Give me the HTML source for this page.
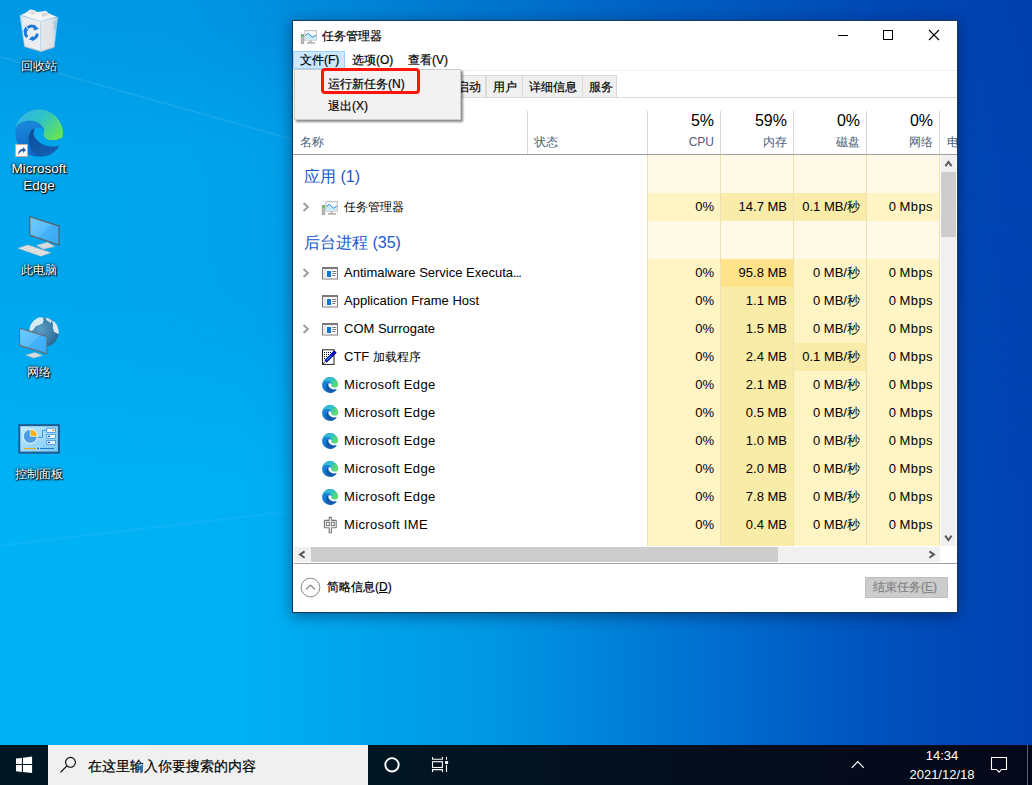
<!DOCTYPE html><html><head><meta charset="utf-8"><style>
*{box-sizing:border-box}
html,body{margin:0;padding:0}
body{width:1032px;height:785px;overflow:hidden;position:relative;font-family:"Liberation Sans",sans-serif;
background:linear-gradient(90deg,#00b2f5 0%,#00b0f4 24%,#0096e4 48%,#0068cc 72.7%,#0052be 85%,#0044b4 97%,#0042b2 100%);}
.a{position:absolute;white-space:nowrap}
.lbl{position:absolute;color:#fff;font-size:12px;line-height:17px;text-align:center;width:80px;left:-1px;
text-shadow:0 0 2px #000,0 0 3px rgba(0,0,0,.7),1px 1px 1px #000}
.t{position:absolute;white-space:nowrap;font-size:12px;line-height:14px;color:#000;-webkit-text-stroke:0.2px currentColor}
.r{position:absolute;white-space:nowrap;font-size:13px;line-height:16px;color:#000}
.rv{position:absolute;white-space:nowrap;font-size:13px;line-height:16px;color:#000;text-align:right}
.hd{position:absolute;white-space:nowrap;color:#4c607a;font-size:12px;line-height:14px}
.b{position:absolute}
</style></head><body>
<div class="b" style="left:0;top:0;width:1032px;height:745px;background:linear-gradient(90deg,rgba(0,60,170,.22) 0%,rgba(0,60,170,.22) 17%,rgba(0,60,170,.36) 44%,rgba(0,60,170,.42) 68%,rgba(0,60,170,.42) 100%);-webkit-mask-image:linear-gradient(180deg,#000 0%,rgba(0,0,0,.9) 6%,rgba(0,0,0,.45) 20%,rgba(0,0,0,.4) 40%,rgba(0,0,0,0) 64%);mask-image:linear-gradient(180deg,#000 0%,rgba(0,0,0,.9) 6%,rgba(0,0,0,.45) 20%,rgba(0,0,0,.4) 40%,rgba(0,0,0,0) 64%)"></div>
<div class="b" style="left:0px;top:56px;width:320px;height:2px;background:rgba(255,255,255,.08);transform:rotate(15.7deg);transform-origin:0 0"></div>
<div class="b" style="left:0px;top:544px;width:320px;height:3px;background:rgba(255,255,255,.035);transform:rotate(-6.7deg);transform-origin:0 0"></div>
<svg class="b" style="left:16px;top:6px" width="46" height="48" viewBox="16 6 46 48">
<defs><linearGradient id="rbl" x1="0" y1="0" x2="1" y2="0"><stop offset="0" stop-color="#bcdaf0"/><stop offset="0.18" stop-color="#e8ecef"/><stop offset="1" stop-color="#eef0f2"/></linearGradient>
<linearGradient id="rbr" x1="0" y1="0" x2="1" y2="0"><stop offset="0" stop-color="#e6e8ea"/><stop offset="0.7" stop-color="#dde2e6"/><stop offset="1" stop-color="#a9cbe6"/></linearGradient></defs>
<polygon points="20,15.2 40.5,21.3 41,51.3 24.6,46.4" fill="url(#rbl)" stroke="#b4d2ea" stroke-width="0.6"/>
<polygon points="40.5,21.3 57.6,17 54.2,47 41,51.3" fill="url(#rbr)" stroke="#b4d2ea" stroke-width="0.6"/>
<polygon points="52.5,22 56.8,20 55.5,31 53,28 54.5,25" fill="#a6c8e4"/>
<polygon points="21,15 27,12 30,9.5 34,10 37,12 42,11.5 46,10.8 48,13 56.5,16.8 40.5,21.3" fill="#f4f4f4"/>
<polygon points="28,13 33,10.5 36,13 33,15" fill="#dcdcdc"/>
<polygon points="41,14 46,12 48,15 43,17" fill="#d4d4d4"/>
<g fill="none" stroke="#1e78d8" stroke-width="3">
<path d="M27.6 27.8A6 6 0 0 1 35.2 27.4"/>
<path d="M37.3 33.6A6 6 0 0 1 32.2 39"/>
<path d="M27.3 37A6 6 0 0 1 25.6 30.6"/>
</g>
<g fill="#1e78d8"><polygon points="34.2,24.6 38.8,29 33.6,30.4"/><polygon points="34,41 28.8,39.6 32.6,35.8"/><polygon points="23.2,31.6 25.4,26.4 28.6,30.6"/></g>
<path d="M24.6 46.4L41 51.3L54.2 47" fill="none" stroke="#d8c8c0" stroke-width="0.8"/>
</svg>
<svg class="b" style="left:15px;top:109px" width="48" height="48" viewBox="0 0 48 48"><defs><linearGradient id="ecbig" x1="0" y1="0.1" x2="1" y2="0.7"><stop offset="0" stop-color="#36b4ee"/><stop offset="0.5" stop-color="#2ec4c4"/><stop offset="1" stop-color="#64e25c"/></linearGradient><linearGradient id="embig" x1="0" y1="0" x2="0.3" y2="1"><stop offset="0" stop-color="#2096e6"/><stop offset="1" stop-color="#0c66c4"/></linearGradient><linearGradient id="edbig" x1="0" y1="0" x2="0.8" y2="1"><stop offset="0" stop-color="#0c4c98"/><stop offset="1" stop-color="#1462b6"/></linearGradient></defs><mask id="hmbig"><rect width="48" height="48" fill="#fff"/><path d="M20 19C22.5 17.8 27 18.5 28.8 21.5C28.5 22.8 28.2 24 28.2 25.5C28.2 29 32 31.5 37.5 31.5C41 31.5 44.5 30.3 47.6 28.5L49 28V39L44.5 38.5L30 39L18 32Z" fill="#000"/></mask><g mask="url(#hmbig)"><circle cx="24" cy="24" r="23.8" fill="url(#embig)"/><path d="M0.1 20.5C1.5 15 7.5 11.4 14.2 11.4C21 11.4 26.8 14.5 28.8 20C29.1 21.5 28.2 23.5 28.2 25.5C28.2 29 32 31.5 37.5 31.5C41 31.5 44.5 30.3 47.6 28.5A23.9 23.9 0 0 0 0.1 20.5Z" fill="url(#ecbig)"/></g><path d="M20 19C15.5 20.5 13.2 26 13.5 31.4C14 39.5 19.5 46.5 26.5 47.2C34.5 47.8 41.5 42.5 44.5 36.2C42 37.3 40 37.6 37.5 37.6C30 37.6 22 33.5 18.8 26.5C18 24.5 18.5 21 20 19Z" fill="url(#edbig)"/></svg>
<svg class="b" style="left:15px;top:144px" width="13" height="13" viewBox="0 0 13 13"><rect x="0.5" y="0.5" width="12" height="12" fill="#fff" stroke="#c9ab95" stroke-width="1"/>
<path d="M3.5 11C3 7.5 4.5 5.2 8 4.8V3L11 6L8 9V7C6 7 4.5 8.2 3.5 11Z" fill="#2a5cae"/></svg>
<svg class="b" style="left:14px;top:210px" width="50" height="50" viewBox="14 210 50 50">
<defs><linearGradient id="pcs" x1="0" y1="0" x2="1" y2="1"><stop offset="0" stop-color="#72caff"/><stop offset="0.5" stop-color="#58bcfb"/><stop offset="0.52" stop-color="#44b2f8"/><stop offset="1" stop-color="#38aaf4"/></linearGradient></defs>
<polygon points="29.3,216 59.5,225.6 59.5,245.7 29.3,235.8" fill="#5e5e5e"/>
<polygon points="30.4,217.6 58.4,226.4 58.4,244.2 30.4,234.8" fill="url(#pcs)"/>
<polygon points="36.3,245.3 47.5,242.2 54.8,246.6 43.5,249.2" fill="#d6dadd" stroke="#b0b4b8" stroke-width="0.4"/>
<polygon points="17.8,248.2 28,244.9 50.9,252.7 40.8,256.2" fill="#e8e8e8" stroke="#aeb2b6" stroke-width="0.5"/>
<g stroke="#c4c4c4" stroke-width="0.4"><path d="M21 247.2L44 254.9M24.5 246L47.5 253.6M23 249.5L33 246.2M28 251.2L38 247.9M33 252.9L43 249.6M38 254.6L48 251.3"/></g>
</svg>
<svg class="b" style="left:14px;top:312px" width="50" height="50" viewBox="14 312 50 50">
<defs><radialGradient id="glb" cx="0.4" cy="0.4" r="0.75"><stop offset="0" stop-color="#5a9ec6"/><stop offset="1" stop-color="#25628c"/></radialGradient>
<linearGradient id="nws" x1="0" y1="0" x2="1" y2="1"><stop offset="0" stop-color="#72caff"/><stop offset="0.5" stop-color="#58bcfb"/><stop offset="0.52" stop-color="#44b2f8"/><stop offset="1" stop-color="#38aaf4"/></linearGradient></defs>
<circle cx="43.6" cy="332.2" r="15" fill="url(#glb)"/>
<polygon points="29.2,330 30.5,325 34,320.2 38.5,317.6 43,317.2 43.6,320.5 42.5,323.5 39,325 35.5,326.5 34,329 31.5,331.5" fill="#d6ecf5"/>
<polygon points="45.5,317.6 49,318.5 52,320.5 50.5,323 48.5,321.5 46.5,320" fill="#cfe6f2"/>
<polygon points="51.5,321.2 54.2,321.5 57,325 58.6,330 58.8,333.5 57,333.5 53.8,331.5 52.8,327 53.2,324" fill="#d6ecf5"/>
<polygon points="19.1,327.6 47.4,336.2 47.4,354.4 19.1,346" fill="#6a6a6a"/>
<polygon points="20.1,329 46.4,337 46.4,353 20.1,345" fill="url(#nws)"/>
<polygon points="25.5,355 35,352.5 42.7,355.6 33.5,358" fill="#d6dadd" stroke="#b0b4b8" stroke-width="0.4"/>
</svg>
<svg class="b" style="left:14px;top:418px" width="50" height="40" viewBox="14 418 50 40">
<defs><linearGradient id="cpg" x1="0" y1="0" x2="1" y2="1"><stop offset="0" stop-color="#c4ecfe"/><stop offset="1" stop-color="#78c8f4"/></linearGradient></defs>
<rect x="18.3" y="424.1" width="41.6" height="29.6" fill="#1d5e96"/>
<rect x="20.3" y="426.2" width="37.6" height="25.4" fill="url(#cpg)"/>
<circle cx="30.3" cy="436.3" r="7" fill="#4a9ee0" stroke="#f4faff" stroke-width="0.9"/>
<path d="M30.3 436.3V429.3A7 7 0 0 1 37.3 436.3Z" fill="#f8b010" stroke="#f4faff" stroke-width="0.7"/>
<polyline points="37.5,437.4 42.5,437.4 42.5,430.4 46.6,430.4" fill="none" stroke="#2a86d8" stroke-width="0.8"/>
<g fill="#eef8ff" stroke="#2a86d8" stroke-width="0.7"><rect x="46.8" y="428.2" width="8.6" height="4.2"/><rect x="46.8" y="434.4" width="8.6" height="4.2"/><rect x="46.8" y="440.4" width="8.6" height="4.2"/></g>
<rect x="52.3" y="429.7" width="2" height="1.2" fill="#f07010"/><rect x="48" y="435.8" width="2" height="1.2" fill="#0a4a8a"/><rect x="48" y="441.8" width="2" height="1.2" fill="#0a4a8a"/>
<path d="M24 448.5H36.5" stroke="#f5a000" stroke-width="0.9"/><path d="M39.5 448.5H54" stroke="#0a62c8" stroke-width="0.8"/>
<rect x="36.6" y="447.1" width="2.8" height="2.8" fill="#0a84f0" stroke="#f4faff" stroke-width="0.6"/>
</svg>
<div class="lbl" style="top:58px">回收站</div>
<div class="lbl" style="top:160px;font-size:13.5px;line-height:17.2px">Microsoft<br>Edge</div>
<div class="lbl" style="top:262px">此电脑</div>
<div class="lbl" style="top:364px">网络</div>
<div class="lbl" style="top:466px">控制面板</div>
<div class="b" style="left:292px;top:20px;width:666px;height:593px;background:#fff;border:1px solid #143a5c;box-shadow:0 3px 14px rgba(0,10,40,.45)"></div>
<svg class="b" style="left:300px;top:29px" width="18" height="16" viewBox="0 0 18 16">
<rect x="1.2" y="5.6" width="2.6" height="9" fill="#c4c4c4" stroke="#8c8c8c" stroke-width="0.7"/>
<rect x="1.5" y="6.1" width="2" height="1.6" fill="#30d030"/>
<rect x="4.3" y="1" width="12.7" height="10.7" fill="#c6c6c6"/>
<rect x="5.5" y="2.2" width="10.3" height="8.3" fill="#fafdff"/>
<polygon points="5.5,6.6 8.4,4.2 12.5,8.3 15.8,6.2 15.8,10.5 5.5,10.5" fill="#c6ebfb"/>
<polyline points="5.5,6.6 8.4,4.2 12.5,8.3 15.8,6.2" fill="none" stroke="#2080d0" stroke-width="1"/>
<rect x="9.3" y="11.7" width="2.6" height="1.5" fill="#b4b4b4"/>
<rect x="7" y="13.1" width="8" height="1.7" fill="#b4b4b4"/>
</svg>
<div class="t" style="left:322px;top:29px">任务管理器</div>
<div class="b" style="left:838px;top:35px;width:10px;height:1px;background:#000"></div>
<div class="b" style="left:883px;top:30px;width:10px;height:10px;border:1px solid #000"></div>
<svg class="b" style="left:928px;top:29px" width="12" height="12" viewBox="0 0 12 12"><path d="M1 1L11 11M11 1L1 11" stroke="#000" stroke-width="1.1"/></svg>
<div class="b" style="left:293px;top:51px;width:52px;height:18px;background:#cce8ff;border:1px solid #99d1ff"></div>
<div class="t" style="left:300px;top:53px">文件(F)</div>
<div class="t" style="left:352px;top:53px">选项(O)</div>
<div class="t" style="left:408px;top:53px">查看(V)</div>
<div class="b" style="left:293px;top:70px;width:664px;height:1px;background:#f0f0f0"></div>
<div class="b" style="left:296px;top:75px;width:190px;height:23px;background:#f0f0f0;border:1px solid #d9d9d9"></div>
<div class="t" style="left:457px;top:80px">启动</div>
<div class="b" style="left:486px;top:75px;width:37px;height:23px;background:#f0f0f0;border:1px solid #d9d9d9"></div>
<div class="t" style="left:493px;top:80px">用户</div>
<div class="b" style="left:522px;top:75px;width:61px;height:23px;background:#f0f0f0;border:1px solid #d9d9d9"></div>
<div class="t" style="left:529px;top:80px">详细信息</div>
<div class="b" style="left:582px;top:75px;width:35px;height:23px;background:#f0f0f0;border:1px solid #d9d9d9"></div>
<div class="t" style="left:589px;top:80px">服务</div>
<div class="b" style="left:293px;top:97px;width:664px;height:1px;background:#d9d9d9"></div>
<div class="b" style="left:527px;top:111px;width:1px;height:43px;background:#d8d8d8"></div>
<div class="b" style="left:647px;top:111px;width:1px;height:43px;background:#d8d8d8"></div>
<div class="b" style="left:720px;top:111px;width:1px;height:43px;background:#d8d8d8"></div>
<div class="b" style="left:793px;top:111px;width:1px;height:43px;background:#d8d8d8"></div>
<div class="b" style="left:866px;top:111px;width:1px;height:43px;background:#d8d8d8"></div>
<div class="b" style="left:939px;top:111px;width:1px;height:43px;background:#d8d8d8"></div>
<div class="hd" style="left:300px;top:135px">名称</div>
<div class="hd" style="left:534px;top:135px">状态</div>
<div class="a" style="right:318px;top:112px;font-size:16px;line-height:18px;color:#000">5%</div>
<div class="hd" style="right:318px;top:135px">CPU</div>
<div class="a" style="right:245px;top:112px;font-size:16px;line-height:18px;color:#000">59%</div>
<div class="hd" style="right:245px;top:135px">内存</div>
<div class="a" style="right:172px;top:112px;font-size:16px;line-height:18px;color:#000">0%</div>
<div class="hd" style="right:172px;top:135px">磁盘</div>
<div class="a" style="right:99px;top:112px;font-size:16px;line-height:18px;color:#000">0%</div>
<div class="hd" style="right:99px;top:135px">网络</div>
<div class="hd" style="left:947px;top:135px;width:10px;overflow:hidden">电</div>
<div class="b" style="left:293px;top:154px;width:664px;height:1px;background:#a0a0a0"></div>
<div class="b" style="left:647px;top:155px;width:292px;height:38px;background:#fff9e6"></div>
<div class="a" style="left:304px;top:168px;font-size:16px;line-height:18px;color:#2058d0">应用 (1)</div>
<div class="b" style="left:647px;top:193px;width:73px;height:28px;background:#fff4c4"></div>
<div class="b" style="left:720px;top:193px;width:73px;height:28px;background:#f9eca8"></div>
<div class="b" style="left:793px;top:193px;width:73px;height:28px;background:#f9eca8"></div>
<div class="b" style="left:866px;top:193px;width:73px;height:28px;background:#fff4c4"></div>
<svg class="b" style="left:302px;top:202px" width="8" height="10" viewBox="0 0 8 10"><path d="M1.5 1L6 5L1.5 9" fill="none" stroke="#9c9c9c" stroke-width="1.9"/></svg>
<svg class="b" style="left:321px;top:200px" width="18" height="16" viewBox="0 0 18 16">
<rect x="1.2" y="5.6" width="2.6" height="9" fill="#c4c4c4" stroke="#8c8c8c" stroke-width="0.7"/>
<rect x="1.5" y="6.1" width="2" height="1.6" fill="#30d030"/>
<rect x="4.3" y="1" width="12.7" height="10.7" fill="#c6c6c6"/>
<rect x="5.5" y="2.2" width="10.3" height="8.3" fill="#fafdff"/>
<polygon points="5.5,6.6 8.4,4.2 12.5,8.3 15.8,6.2 15.8,10.5 5.5,10.5" fill="#c6ebfb"/>
<polyline points="5.5,6.6 8.4,4.2 12.5,8.3 15.8,6.2" fill="none" stroke="#2080d0" stroke-width="1"/>
<rect x="9.3" y="11.7" width="2.6" height="1.5" fill="#b4b4b4"/>
<rect x="7" y="13.1" width="8" height="1.7" fill="#b4b4b4"/>
</svg>
<div class="r" style="left:344px;top:199px"><span style="font-size:12px">任务管理器</span></div>
<div class="rv" style="right:318px;top:199px">0%</div>
<div class="rv" style="right:245px;top:199px">14.7 MB</div>
<div class="rv" style="right:172px;top:199px">0.1 MB/秒</div>
<div class="rv" style="right:99px;top:199px">0 <span style="letter-spacing:0.4px">Mbps</span></div>
<div class="b" style="left:647px;top:221px;width:292px;height:38px;background:#fff9e6"></div>
<div class="a" style="left:304px;top:234px;font-size:16px;line-height:18px;color:#2058d0">后台进程 (35)</div>
<div class="b" style="left:647px;top:259px;width:73px;height:28px;background:#fff4c4"></div>
<div class="b" style="left:720px;top:259px;width:73px;height:28px;background:#ffe28a"></div>
<div class="b" style="left:793px;top:259px;width:73px;height:28px;background:#fff4c4"></div>
<div class="b" style="left:866px;top:259px;width:73px;height:28px;background:#fff4c4"></div>
<svg class="b" style="left:302px;top:268px" width="8" height="10" viewBox="0 0 8 10"><path d="M1.5 1L6 5L1.5 9" fill="none" stroke="#9c9c9c" stroke-width="1.9"/></svg>
<svg class="b" style="left:322px;top:267px" width="16" height="13" viewBox="0 0 16 13">
<rect x="0.5" y="0.5" width="15" height="11.5" fill="#fff" stroke="#7a7a7a" stroke-width="1"/>
<rect x="0.5" y="0.5" width="15" height="1.6" fill="#7a7a7a"/>
<rect x="1.2" y="2.2" width="3" height="9.2" fill="#e8e8e8"/>
<rect x="5" y="4" width="4" height="6" fill="#0a74d8"/>
<rect x="10.2" y="4" width="4" height="1" fill="#777"/>
<rect x="10.2" y="6" width="4" height="1" fill="#777"/>
<rect x="10.2" y="8" width="3" height="1" fill="#777"/>
</svg>
<div class="r" style="left:344px;top:265px">Antimalware Service Executa<span style="letter-spacing:-1px">...</span></div>
<div class="rv" style="right:318px;top:265px">0%</div>
<div class="rv" style="right:245px;top:265px">95.8 MB</div>
<div class="rv" style="right:172px;top:265px">0 MB/秒</div>
<div class="rv" style="right:99px;top:265px">0 <span style="letter-spacing:0.4px">Mbps</span></div>
<div class="b" style="left:647px;top:287px;width:73px;height:28px;background:#fff4c4"></div>
<div class="b" style="left:720px;top:287px;width:73px;height:28px;background:#f9eca8"></div>
<div class="b" style="left:793px;top:287px;width:73px;height:28px;background:#fff4c4"></div>
<div class="b" style="left:866px;top:287px;width:73px;height:28px;background:#fff4c4"></div>
<svg class="b" style="left:322px;top:295px" width="16" height="13" viewBox="0 0 16 13">
<rect x="0.5" y="0.5" width="15" height="11.5" fill="#fff" stroke="#7a7a7a" stroke-width="1"/>
<rect x="0.5" y="0.5" width="15" height="1.6" fill="#7a7a7a"/>
<rect x="1.2" y="2.2" width="3" height="9.2" fill="#e8e8e8"/>
<rect x="5" y="4" width="4" height="6" fill="#0a74d8"/>
<rect x="10.2" y="4" width="4" height="1" fill="#777"/>
<rect x="10.2" y="6" width="4" height="1" fill="#777"/>
<rect x="10.2" y="8" width="3" height="1" fill="#777"/>
</svg>
<div class="r" style="left:344px;top:293px">Application Frame Host</div>
<div class="rv" style="right:318px;top:293px">0%</div>
<div class="rv" style="right:245px;top:293px">1.1 MB</div>
<div class="rv" style="right:172px;top:293px">0 MB/秒</div>
<div class="rv" style="right:99px;top:293px">0 <span style="letter-spacing:0.4px">Mbps</span></div>
<div class="b" style="left:647px;top:315px;width:73px;height:28px;background:#fff4c4"></div>
<div class="b" style="left:720px;top:315px;width:73px;height:28px;background:#f9eca8"></div>
<div class="b" style="left:793px;top:315px;width:73px;height:28px;background:#fff4c4"></div>
<div class="b" style="left:866px;top:315px;width:73px;height:28px;background:#fff4c4"></div>
<svg class="b" style="left:302px;top:324px" width="8" height="10" viewBox="0 0 8 10"><path d="M1.5 1L6 5L1.5 9" fill="none" stroke="#9c9c9c" stroke-width="1.9"/></svg>
<svg class="b" style="left:322px;top:323px" width="16" height="13" viewBox="0 0 16 13">
<rect x="0.5" y="0.5" width="15" height="11.5" fill="#fff" stroke="#7a7a7a" stroke-width="1"/>
<rect x="0.5" y="0.5" width="15" height="1.6" fill="#7a7a7a"/>
<rect x="1.2" y="2.2" width="3" height="9.2" fill="#e8e8e8"/>
<rect x="5" y="4" width="4" height="6" fill="#0a74d8"/>
<rect x="10.2" y="4" width="4" height="1" fill="#777"/>
<rect x="10.2" y="6" width="4" height="1" fill="#777"/>
<rect x="10.2" y="8" width="3" height="1" fill="#777"/>
</svg>
<div class="r" style="left:344px;top:321px">COM Surrogate</div>
<div class="rv" style="right:318px;top:321px">0%</div>
<div class="rv" style="right:245px;top:321px">1.5 MB</div>
<div class="rv" style="right:172px;top:321px">0 MB/秒</div>
<div class="rv" style="right:99px;top:321px">0 <span style="letter-spacing:0.4px">Mbps</span></div>
<div class="b" style="left:647px;top:343px;width:73px;height:28px;background:#fff4c4"></div>
<div class="b" style="left:720px;top:343px;width:73px;height:28px;background:#f9eca8"></div>
<div class="b" style="left:793px;top:343px;width:73px;height:28px;background:#f9eca8"></div>
<div class="b" style="left:866px;top:343px;width:73px;height:28px;background:#fff4c4"></div>
<svg class="b" style="left:322px;top:349px" width="16" height="16" viewBox="0 0 16 16">
<rect x="0.5" y="0.8" width="11.5" height="14.6" fill="#fff" stroke="#222" stroke-width="1"/>
<g fill="#111"><rect x="2" y="3" width="1" height="1"/><rect x="4" y="3" width="1" height="1"/><rect x="6" y="3" width="1" height="1"/><rect x="8" y="3" width="1" height="1"/>
<rect x="2" y="5" width="1" height="1"/><rect x="4" y="5" width="1" height="1"/><rect x="6" y="5" width="1" height="1"/>
<rect x="2" y="7" width="1" height="1"/><rect x="4" y="7" width="1" height="1"/><rect x="2" y="9" width="1" height="1"/></g>
<path d="M3.5 12.5L13.5 2.5" stroke="#00007a" stroke-width="3.2"/>
<path d="M3.8 12L13 2.8" stroke="#1010ff" stroke-width="1.6"/>
<path d="M4.5 11.3L9 6.8" stroke="#18e8ff" stroke-width="0.9"/>
<path d="M1 15L3 12.6" stroke="#222" stroke-width="1"/>
</svg>
<div class="r" style="left:344px;top:349px">CTF <span style="font-size:12px">加载程序</span></div>
<div class="rv" style="right:318px;top:349px">0%</div>
<div class="rv" style="right:245px;top:349px">2.4 MB</div>
<div class="rv" style="right:172px;top:349px">0.1 MB/秒</div>
<div class="rv" style="right:99px;top:349px">0 <span style="letter-spacing:0.4px">Mbps</span></div>
<div class="b" style="left:647px;top:371px;width:73px;height:28px;background:#fff4c4"></div>
<div class="b" style="left:720px;top:371px;width:73px;height:28px;background:#f9eca8"></div>
<div class="b" style="left:793px;top:371px;width:73px;height:28px;background:#fff4c4"></div>
<div class="b" style="left:866px;top:371px;width:73px;height:28px;background:#fff4c4"></div>
<svg class="b" style="left:322px;top:377px" width="16" height="16" viewBox="0 0 48 48"><defs><linearGradient id="ec5" x1="0" y1="0.1" x2="1" y2="0.7"><stop offset="0" stop-color="#36b4ee"/><stop offset="0.5" stop-color="#2ec4c4"/><stop offset="1" stop-color="#64e25c"/></linearGradient><linearGradient id="em5" x1="0" y1="0" x2="0.3" y2="1"><stop offset="0" stop-color="#2096e6"/><stop offset="1" stop-color="#0c66c4"/></linearGradient><linearGradient id="ed5" x1="0" y1="0" x2="0.8" y2="1"><stop offset="0" stop-color="#0c4c98"/><stop offset="1" stop-color="#1462b6"/></linearGradient></defs><mask id="hm5"><rect width="48" height="48" fill="#fff"/><path d="M20 19C22.5 17.8 27 18.5 28.8 21.5C28.5 22.8 28.2 24 28.2 25.5C28.2 29 32 31.5 37.5 31.5C41 31.5 44.5 30.3 47.6 28.5L49 28V39L44.5 38.5L30 39L18 32Z" fill="#000"/></mask><g mask="url(#hm5)"><circle cx="24" cy="24" r="23.8" fill="url(#em5)"/><path d="M0.1 20.5C1.5 15 7.5 11.4 14.2 11.4C21 11.4 26.8 14.5 28.8 20C29.1 21.5 28.2 23.5 28.2 25.5C28.2 29 32 31.5 37.5 31.5C41 31.5 44.5 30.3 47.6 28.5A23.9 23.9 0 0 0 0.1 20.5Z" fill="url(#ec5)"/></g><path d="M20 19C15.5 20.5 13.2 26 13.5 31.4C14 39.5 19.5 46.5 26.5 47.2C34.5 47.8 41.5 42.5 44.5 36.2C42 37.3 40 37.6 37.5 37.6C30 37.6 22 33.5 18.8 26.5C18 24.5 18.5 21 20 19Z" fill="url(#ed5)"/></svg>
<div class="r" style="left:344px;top:377px"><span style="letter-spacing:0.35px">Microsoft Edge</span></div>
<div class="rv" style="right:318px;top:377px">0%</div>
<div class="rv" style="right:245px;top:377px">2.1 MB</div>
<div class="rv" style="right:172px;top:377px">0 MB/秒</div>
<div class="rv" style="right:99px;top:377px">0 <span style="letter-spacing:0.4px">Mbps</span></div>
<div class="b" style="left:647px;top:399px;width:73px;height:28px;background:#fff4c4"></div>
<div class="b" style="left:720px;top:399px;width:73px;height:28px;background:#f9eca8"></div>
<div class="b" style="left:793px;top:399px;width:73px;height:28px;background:#fff4c4"></div>
<div class="b" style="left:866px;top:399px;width:73px;height:28px;background:#fff4c4"></div>
<svg class="b" style="left:322px;top:405px" width="16" height="16" viewBox="0 0 48 48"><defs><linearGradient id="ec6" x1="0" y1="0.1" x2="1" y2="0.7"><stop offset="0" stop-color="#36b4ee"/><stop offset="0.5" stop-color="#2ec4c4"/><stop offset="1" stop-color="#64e25c"/></linearGradient><linearGradient id="em6" x1="0" y1="0" x2="0.3" y2="1"><stop offset="0" stop-color="#2096e6"/><stop offset="1" stop-color="#0c66c4"/></linearGradient><linearGradient id="ed6" x1="0" y1="0" x2="0.8" y2="1"><stop offset="0" stop-color="#0c4c98"/><stop offset="1" stop-color="#1462b6"/></linearGradient></defs><mask id="hm6"><rect width="48" height="48" fill="#fff"/><path d="M20 19C22.5 17.8 27 18.5 28.8 21.5C28.5 22.8 28.2 24 28.2 25.5C28.2 29 32 31.5 37.5 31.5C41 31.5 44.5 30.3 47.6 28.5L49 28V39L44.5 38.5L30 39L18 32Z" fill="#000"/></mask><g mask="url(#hm6)"><circle cx="24" cy="24" r="23.8" fill="url(#em6)"/><path d="M0.1 20.5C1.5 15 7.5 11.4 14.2 11.4C21 11.4 26.8 14.5 28.8 20C29.1 21.5 28.2 23.5 28.2 25.5C28.2 29 32 31.5 37.5 31.5C41 31.5 44.5 30.3 47.6 28.5A23.9 23.9 0 0 0 0.1 20.5Z" fill="url(#ec6)"/></g><path d="M20 19C15.5 20.5 13.2 26 13.5 31.4C14 39.5 19.5 46.5 26.5 47.2C34.5 47.8 41.5 42.5 44.5 36.2C42 37.3 40 37.6 37.5 37.6C30 37.6 22 33.5 18.8 26.5C18 24.5 18.5 21 20 19Z" fill="url(#ed6)"/></svg>
<div class="r" style="left:344px;top:405px"><span style="letter-spacing:0.35px">Microsoft Edge</span></div>
<div class="rv" style="right:318px;top:405px">0%</div>
<div class="rv" style="right:245px;top:405px">0.5 MB</div>
<div class="rv" style="right:172px;top:405px">0 MB/秒</div>
<div class="rv" style="right:99px;top:405px">0 <span style="letter-spacing:0.4px">Mbps</span></div>
<div class="b" style="left:647px;top:427px;width:73px;height:28px;background:#fff4c4"></div>
<div class="b" style="left:720px;top:427px;width:73px;height:28px;background:#f9eca8"></div>
<div class="b" style="left:793px;top:427px;width:73px;height:28px;background:#fff4c4"></div>
<div class="b" style="left:866px;top:427px;width:73px;height:28px;background:#fff4c4"></div>
<svg class="b" style="left:322px;top:433px" width="16" height="16" viewBox="0 0 48 48"><defs><linearGradient id="ec7" x1="0" y1="0.1" x2="1" y2="0.7"><stop offset="0" stop-color="#36b4ee"/><stop offset="0.5" stop-color="#2ec4c4"/><stop offset="1" stop-color="#64e25c"/></linearGradient><linearGradient id="em7" x1="0" y1="0" x2="0.3" y2="1"><stop offset="0" stop-color="#2096e6"/><stop offset="1" stop-color="#0c66c4"/></linearGradient><linearGradient id="ed7" x1="0" y1="0" x2="0.8" y2="1"><stop offset="0" stop-color="#0c4c98"/><stop offset="1" stop-color="#1462b6"/></linearGradient></defs><mask id="hm7"><rect width="48" height="48" fill="#fff"/><path d="M20 19C22.5 17.8 27 18.5 28.8 21.5C28.5 22.8 28.2 24 28.2 25.5C28.2 29 32 31.5 37.5 31.5C41 31.5 44.5 30.3 47.6 28.5L49 28V39L44.5 38.5L30 39L18 32Z" fill="#000"/></mask><g mask="url(#hm7)"><circle cx="24" cy="24" r="23.8" fill="url(#em7)"/><path d="M0.1 20.5C1.5 15 7.5 11.4 14.2 11.4C21 11.4 26.8 14.5 28.8 20C29.1 21.5 28.2 23.5 28.2 25.5C28.2 29 32 31.5 37.5 31.5C41 31.5 44.5 30.3 47.6 28.5A23.9 23.9 0 0 0 0.1 20.5Z" fill="url(#ec7)"/></g><path d="M20 19C15.5 20.5 13.2 26 13.5 31.4C14 39.5 19.5 46.5 26.5 47.2C34.5 47.8 41.5 42.5 44.5 36.2C42 37.3 40 37.6 37.5 37.6C30 37.6 22 33.5 18.8 26.5C18 24.5 18.5 21 20 19Z" fill="url(#ed7)"/></svg>
<div class="r" style="left:344px;top:433px"><span style="letter-spacing:0.35px">Microsoft Edge</span></div>
<div class="rv" style="right:318px;top:433px">0%</div>
<div class="rv" style="right:245px;top:433px">1.0 MB</div>
<div class="rv" style="right:172px;top:433px">0 MB/秒</div>
<div class="rv" style="right:99px;top:433px">0 <span style="letter-spacing:0.4px">Mbps</span></div>
<div class="b" style="left:647px;top:455px;width:73px;height:28px;background:#fff4c4"></div>
<div class="b" style="left:720px;top:455px;width:73px;height:28px;background:#f9eca8"></div>
<div class="b" style="left:793px;top:455px;width:73px;height:28px;background:#fff4c4"></div>
<div class="b" style="left:866px;top:455px;width:73px;height:28px;background:#fff4c4"></div>
<svg class="b" style="left:322px;top:461px" width="16" height="16" viewBox="0 0 48 48"><defs><linearGradient id="ec8" x1="0" y1="0.1" x2="1" y2="0.7"><stop offset="0" stop-color="#36b4ee"/><stop offset="0.5" stop-color="#2ec4c4"/><stop offset="1" stop-color="#64e25c"/></linearGradient><linearGradient id="em8" x1="0" y1="0" x2="0.3" y2="1"><stop offset="0" stop-color="#2096e6"/><stop offset="1" stop-color="#0c66c4"/></linearGradient><linearGradient id="ed8" x1="0" y1="0" x2="0.8" y2="1"><stop offset="0" stop-color="#0c4c98"/><stop offset="1" stop-color="#1462b6"/></linearGradient></defs><mask id="hm8"><rect width="48" height="48" fill="#fff"/><path d="M20 19C22.5 17.8 27 18.5 28.8 21.5C28.5 22.8 28.2 24 28.2 25.5C28.2 29 32 31.5 37.5 31.5C41 31.5 44.5 30.3 47.6 28.5L49 28V39L44.5 38.5L30 39L18 32Z" fill="#000"/></mask><g mask="url(#hm8)"><circle cx="24" cy="24" r="23.8" fill="url(#em8)"/><path d="M0.1 20.5C1.5 15 7.5 11.4 14.2 11.4C21 11.4 26.8 14.5 28.8 20C29.1 21.5 28.2 23.5 28.2 25.5C28.2 29 32 31.5 37.5 31.5C41 31.5 44.5 30.3 47.6 28.5A23.9 23.9 0 0 0 0.1 20.5Z" fill="url(#ec8)"/></g><path d="M20 19C15.5 20.5 13.2 26 13.5 31.4C14 39.5 19.5 46.5 26.5 47.2C34.5 47.8 41.5 42.5 44.5 36.2C42 37.3 40 37.6 37.5 37.6C30 37.6 22 33.5 18.8 26.5C18 24.5 18.5 21 20 19Z" fill="url(#ed8)"/></svg>
<div class="r" style="left:344px;top:461px"><span style="letter-spacing:0.35px">Microsoft Edge</span></div>
<div class="rv" style="right:318px;top:461px">0%</div>
<div class="rv" style="right:245px;top:461px">2.0 MB</div>
<div class="rv" style="right:172px;top:461px">0 MB/秒</div>
<div class="rv" style="right:99px;top:461px">0 <span style="letter-spacing:0.4px">Mbps</span></div>
<div class="b" style="left:647px;top:483px;width:73px;height:28px;background:#fff4c4"></div>
<div class="b" style="left:720px;top:483px;width:73px;height:28px;background:#f9eca8"></div>
<div class="b" style="left:793px;top:483px;width:73px;height:28px;background:#fff4c4"></div>
<div class="b" style="left:866px;top:483px;width:73px;height:28px;background:#fff4c4"></div>
<svg class="b" style="left:322px;top:489px" width="16" height="16" viewBox="0 0 48 48"><defs><linearGradient id="ec9" x1="0" y1="0.1" x2="1" y2="0.7"><stop offset="0" stop-color="#36b4ee"/><stop offset="0.5" stop-color="#2ec4c4"/><stop offset="1" stop-color="#64e25c"/></linearGradient><linearGradient id="em9" x1="0" y1="0" x2="0.3" y2="1"><stop offset="0" stop-color="#2096e6"/><stop offset="1" stop-color="#0c66c4"/></linearGradient><linearGradient id="ed9" x1="0" y1="0" x2="0.8" y2="1"><stop offset="0" stop-color="#0c4c98"/><stop offset="1" stop-color="#1462b6"/></linearGradient></defs><mask id="hm9"><rect width="48" height="48" fill="#fff"/><path d="M20 19C22.5 17.8 27 18.5 28.8 21.5C28.5 22.8 28.2 24 28.2 25.5C28.2 29 32 31.5 37.5 31.5C41 31.5 44.5 30.3 47.6 28.5L49 28V39L44.5 38.5L30 39L18 32Z" fill="#000"/></mask><g mask="url(#hm9)"><circle cx="24" cy="24" r="23.8" fill="url(#em9)"/><path d="M0.1 20.5C1.5 15 7.5 11.4 14.2 11.4C21 11.4 26.8 14.5 28.8 20C29.1 21.5 28.2 23.5 28.2 25.5C28.2 29 32 31.5 37.5 31.5C41 31.5 44.5 30.3 47.6 28.5A23.9 23.9 0 0 0 0.1 20.5Z" fill="url(#ec9)"/></g><path d="M20 19C15.5 20.5 13.2 26 13.5 31.4C14 39.5 19.5 46.5 26.5 47.2C34.5 47.8 41.5 42.5 44.5 36.2C42 37.3 40 37.6 37.5 37.6C30 37.6 22 33.5 18.8 26.5C18 24.5 18.5 21 20 19Z" fill="url(#ed9)"/></svg>
<div class="r" style="left:344px;top:489px"><span style="letter-spacing:0.35px">Microsoft Edge</span></div>
<div class="rv" style="right:318px;top:489px">0%</div>
<div class="rv" style="right:245px;top:489px">7.8 MB</div>
<div class="rv" style="right:172px;top:489px">0 MB/秒</div>
<div class="rv" style="right:99px;top:489px">0 <span style="letter-spacing:0.4px">Mbps</span></div>
<div class="b" style="left:647px;top:511px;width:73px;height:28px;background:#fff4c4"></div>
<div class="b" style="left:720px;top:511px;width:73px;height:28px;background:#f9eca8"></div>
<div class="b" style="left:793px;top:511px;width:73px;height:28px;background:#fff4c4"></div>
<div class="b" style="left:866px;top:511px;width:73px;height:28px;background:#fff4c4"></div>
<svg class="b" style="left:323px;top:516px" width="15" height="18" viewBox="0 0 15 18">
<path d="M6.2 1.3H8.4V4.3H13.2V11.7H8.4V16.7H6.2V11.7H1.4V4.3H6.2Z" fill="none" stroke="#7a7a7a" stroke-width="1.15" stroke-linejoin="round"/>
<rect x="3.3" y="6.2" width="3" height="3.4" fill="none" stroke="#7a7a7a" stroke-width="1.1"/>
<rect x="8.3" y="6.2" width="3" height="3.4" fill="none" stroke="#7a7a7a" stroke-width="1.1"/>
</svg>
<div class="r" style="left:344px;top:517px"><span style="letter-spacing:0.35px">Microsoft IME</span></div>
<div class="rv" style="right:318px;top:517px">0%</div>
<div class="rv" style="right:245px;top:517px">0.4 MB</div>
<div class="rv" style="right:172px;top:517px">0 MB/秒</div>
<div class="rv" style="right:99px;top:517px">0 <span style="letter-spacing:0.4px">Mbps</span></div>
<div class="b" style="left:647px;top:539px;width:73px;height:7px;background:#fff4c4"></div>
<div class="b" style="left:720px;top:539px;width:73px;height:7px;background:#f9eca8"></div>
<div class="b" style="left:793px;top:539px;width:73px;height:7px;background:#fff4c4"></div>
<div class="b" style="left:866px;top:539px;width:73px;height:7px;background:#fff4c4"></div>
<div class="b" style="left:720px;top:155px;width:1px;height:391px;background:#eedfb0"></div>
<div class="b" style="left:793px;top:155px;width:1px;height:391px;background:#eedfb0"></div>
<div class="b" style="left:866px;top:155px;width:1px;height:391px;background:#eedfb0"></div>
<div class="b" style="left:939px;top:155px;width:1px;height:391px;background:#eedfb0"></div>
<div class="b" style="left:647px;top:155px;width:1px;height:391px;background:#eedfb0"></div>
<div class="b" style="left:941px;top:155px;width:15px;height:391px;background:#f0f0f0"></div>
<div class="b" style="left:941px;top:172px;width:15px;height:65px;background:#cdcdcd"></div>
<svg class="b" style="left:936px;top:152px" width="24" height="24" viewBox="936 152 24 24"><path d="M945.4 166.2L948.5 162L951.6 166.2" fill="none" stroke="#5a5a5a" stroke-width="2"/></svg>
<svg class="b" style="left:936px;top:526px" width="24" height="24" viewBox="936 526 24 24"><path d="M945.2 535.6L948.4 540L951.6 535.6" fill="none" stroke="#5a5a5a" stroke-width="2"/></svg>
<div class="b" style="left:294px;top:547px;width:646px;height:15px;background:#f0f0f0"></div>
<div class="b" style="left:311px;top:547px;width:467px;height:15px;background:#cdcdcd"></div>
<svg class="b" style="left:292px;top:542px" width="20" height="24" viewBox="292 542 20 24"><path d="M304.6 551.4L300 554.6L304.6 557.8" fill="none" stroke="#5a5a5a" stroke-width="2"/></svg>
<svg class="b" style="left:920px;top:542px" width="20" height="24" viewBox="920 542 20 24"><path d="M929.4 551.4L934 554.6L929.4 557.8" fill="none" stroke="#5a5a5a" stroke-width="2"/></svg>
<div class="b" style="left:294px;top:563px;width:663px;height:1px;background:#a0a0a0"></div>
<svg class="b" style="left:300px;top:577px" width="21" height="21" viewBox="0 0 21 21"><circle cx="10.5" cy="10.5" r="9.3" fill="none" stroke="#8a8a8a" stroke-width="1"/><path d="M6 12.5L10.5 8L15 12.5" fill="none" stroke="#8a8a8a" stroke-width="1.2"/></svg>
<div class="t" style="left:327px;top:580px">简略信息(<u>D</u>)</div>
<div class="b" style="left:865px;top:577px;width:83px;height:21px;background:#cccccc;border:1px solid #bfbfbf"></div>
<div class="t" style="left:873px;top:580px;color:#838383">结束任务(<u>E</u>)</div>
<div class="b" style="left:294px;top:69px;width:167px;height:51px;background:#f2f2f2;border:1px solid #cccccc;box-shadow:2px 2px 2px rgba(0,0,0,.45)"></div>
<div class="t" style="left:328px;top:77px">运行新任务(N)</div>
<div class="t" style="left:328px;top:99px">退出(X)</div>
<div class="b" style="left:321px;top:68px;width:99px;height:26px;border:3px solid #ff1408;border-radius:4px"></div>
<div class="b" style="left:0;top:745px;width:1032px;height:40px;background:linear-gradient(90deg,#011824 0%,#021522 40%,#040c1c 75%,#05081a 100%)"></div>
<div class="b" style="left:48px;top:745px;width:320px;height:40px;background:#f0f0f0"></div>
<div class="t" style="left:88px;top:758px;font-size:14px;line-height:16px;color:#000">在这里输入你要搜索的内容</div>
<svg class="b" style="left:0;top:745px" width="48" height="40" viewBox="0 745 48 40"><g fill="#fff"><polygon points="16,758.6 21.9,757.9 21.9,763.9 16,763.9"/><polygon points="23,757.7 32.1,756.6 32.1,763.9 23,763.9"/><polygon points="16,765 21.9,765 21.9,772 16,771.2"/><polygon points="23,765 32.1,765 32.1,773 23,772.1"/></g></svg>
<svg class="b" style="left:55px;top:750px" width="30" height="30" viewBox="55 750 30 30"><circle cx="70.5" cy="762.3" r="4.9" fill="none" stroke="#000" stroke-width="1.1"/><path d="M66.9 765.9L60.4 772.4" stroke="#000" stroke-width="1.2"/></svg>
<svg class="b" style="left:380px;top:753px" width="24" height="24" viewBox="380 753 24 24"><circle cx="392" cy="764.8" r="6.7" fill="none" stroke="#fff" stroke-width="1.9"/></svg>
<svg class="b" style="left:426px;top:750px" width="30" height="30" viewBox="426 750 30 30"><g fill="none" stroke="#fff" stroke-width="1.1"><path d="M432.5 756.9V759.2H442.4V756.9"/><rect x="432.5" y="761.7" width="9.9" height="5.8"/><path d="M432.5 772V769.6H442.4V772"/><path d="M446.5 756.9V759.7M446.5 765.1V772"/></g><rect x="445.1" y="761.1" width="3" height="2.9" fill="#fff"/></svg>
<svg class="b" style="left:848px;top:757px" width="20" height="14" viewBox="848 757 20 14"><path d="M851.8 767.8L857.8 761.6L863.8 767.8" fill="none" stroke="#fff" stroke-width="1.2"/></svg>
<div class="a" style="left:904px;top:748px;width:76px;text-align:center;color:#fff;font-size:13px;line-height:15px">14:34</div>
<div class="a" style="left:904px;top:767px;width:76px;text-align:center;color:#fff;font-size:13px;line-height:15px">2021/12/18</div>
<svg class="b" style="left:988px;top:754px" width="22" height="22" viewBox="988 754 22 22"><path d="M991.5 757.5H1006.5V769.5H1001.5L999 772.2L996.5 769.5H991.5Z" fill="none" stroke="#fff" stroke-width="1.1"/></svg>
<div class="b" style="left:1027px;top:745px;width:1px;height:40px;background:#5a6070"></div>
</body></html>
